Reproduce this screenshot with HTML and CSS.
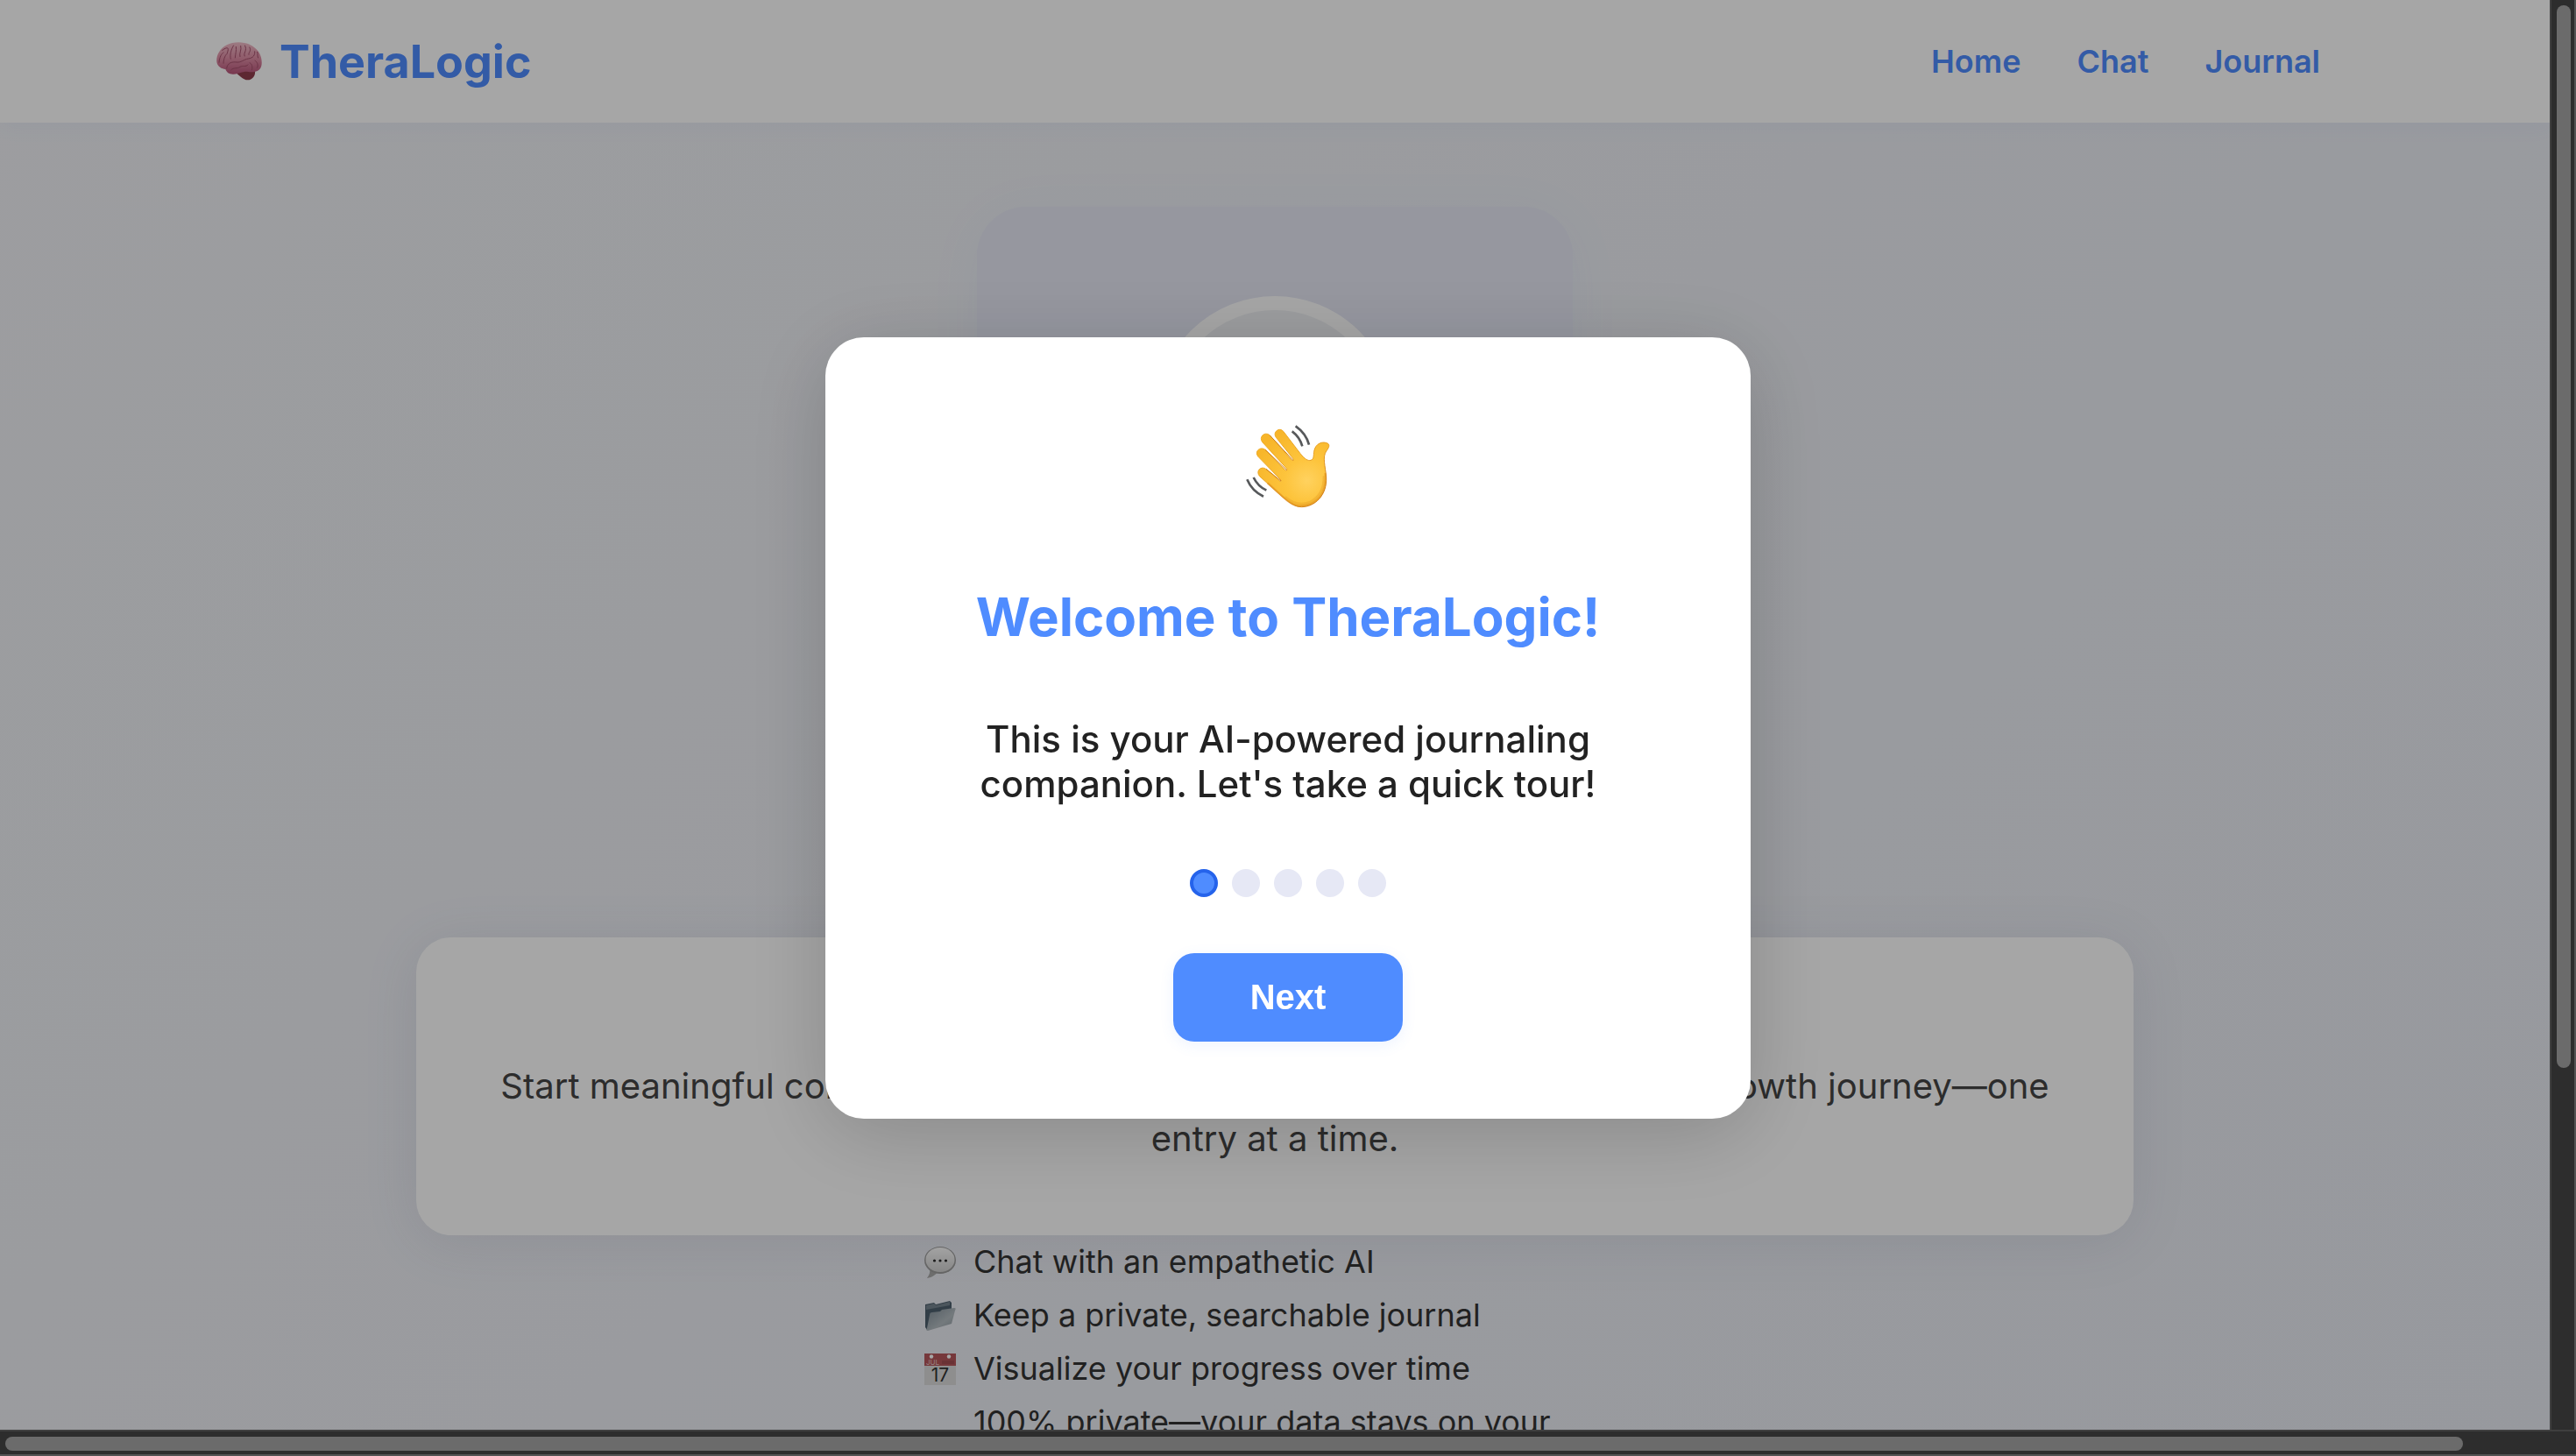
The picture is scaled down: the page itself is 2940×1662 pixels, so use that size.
FILE: index.html
```html
<!DOCTYPE html>
<html lang="en">
<head>
<meta charset="utf-8">
<title>TheraLogic</title>
<link rel="stylesheet" href="styles.css">
</head>
<body>
<div class="frame">
  <div class="page">
    <header class="header">
      <div class="header-inner">
        <a class="brand" href="#">
          <svg class="brand-icon" viewBox="138 138 162 138" aria-hidden="true">
            <defs>
              <linearGradient id="brain" x1="0" y1="0" x2="0" y2="1"><stop offset="0" stop-color="#f0bcc8"/><stop offset=".5" stop-color="#dd8ca4"/><stop offset="1" stop-color="#b8557a"/></linearGradient>
            </defs>
            <path d="M210 240C225 236 262 232 273 240C276 258 262 272 247 271C234 270 222 258 210 248Z" fill="#8f3d4c"/>
            <path d="M142 208C140 180 160 152 195 144C235 137 262 150 277 165C293 178 299 205 295 222C291 240 275 246 250 243C232 240 222 250 200 251C185 252 176 245 172 234C155 233 143 222 142 208Z" fill="url(#brain)"/>
            <g class="gyri"><path d="M150 212C152 190 158 182 166 176M165 215C166 195 172 185 180 178M160 170C180 155 185 160 178 178M190 200C186 185 192 165 200 152M205 196C206 180 210 172 208 156M222 192C218 178 228 170 224 153M238 190C232 178 248 170 238 152M252 185C250 176 262 172 254 158M176 232C178 212 195 208 210 210C225 212 235 200 250 198C266 196 274 186 272 172M190 238C200 226 212 234 222 226C232 220 240 228 250 218M262 238C266 224 262 215 254 212M280 230C286 220 280 208 272 204M284 196C280 186 284 180 280 174"/></g>
          </svg>
          <span>TheraLogic</span>
        </a>
        <nav class="nav">
          <a href="#">Home</a>
          <a href="#">Chat</a>
          <a href="#">Journal</a>
        </nav>
      </div>
    </header>
    <main class="main">
      <div class="hero"><div class="hero-circle"></div></div>
      <section class="intro">
        <p>Start meaningful conversations, reflect on your thoughts, and track your growth journey—one entry at a time.</p>
      </section>
      <ul class="features">
        <li>
          <svg class="feature-icon" viewBox="0 0 36 36" aria-hidden="true">
            <defs>
              <linearGradient id="bubble" x1="0" y1="0" x2="0" y2="1"><stop offset="0" stop-color="#fafafa"/><stop offset="1" stop-color="#cfcfcf"/></linearGradient>
            </defs>
            <path d="M6 25C7 30 5 33 3 36C9 35 13 32 15 29Z" fill="#a8a8a8"/>
            <ellipse cx="18" cy="15.500" rx="18" ry="15.500" fill="#9c9c9c"/>
            <ellipse cx="18" cy="15" rx="16.500" ry="14" fill="url(#bubble)"/>
            <g fill="#2c2c2c"><circle cx="11.500" cy="16" r="1.600"/><circle cx="18" cy="16" r="1.600"/><circle cx="24.500" cy="16" r="1.600"/></g>
          </svg>
          <span>Chat with an empathetic AI</span>
        </li>
        <li>
          <svg class="feature-icon" viewBox="0 0 36 36" aria-hidden="true">
            <defs>
              <linearGradient id="folder" x1="0" y1="0" x2="1" y2="1"><stop offset="0" stop-color="#7f8d97"/><stop offset=".6" stop-color="#b3bcc1"/><stop offset="1" stop-color="#8d989f"/></linearGradient>
            </defs>
            <path d="M1 5L11 3L13 5L29 1L31 3V24L3 34L1 31Z" fill="#4e606e"/>
            <path d="M2 6L11 4L13 6L29 2V6L2 11Z" fill="#75858f"/>
            <path d="M6 17C6 15 7 14 9 14L18 13L20 11L34 9C36 9 36 10 35 12L31 27L4 35C2 35 2 34 3 32Z" fill="url(#folder)"/>
          </svg>
          <span>Keep a private, searchable journal</span>
        </li>
        <li>
          <svg class="feature-icon" viewBox="0 0 36 36" aria-hidden="true">
            <path d="M0 1H36V36H0Z" fill="#dadada"/>
            <path d="M0 0H36V14H0Z" fill="#b5575b"/>
            <circle cx="8" cy="3.500" r="2.200" fill="#fff"/><circle cx="28" cy="3.500" r="2.200" fill="#fff"/>
            <path d="M20 8H34V12H20Z" fill="#a34d52"/>
            <text x="2" y="13" font-size="8" fill="#e5c5c5">JUL</text>
            <text x="18" y="32" font-size="21" text-anchor="middle" fill="#333">17</text>
          </svg>
          <span>Visualize your progress over time</span>
        </li>
        <li>
          <span class="feature-icon"></span>
          <span>100% private—your data stays on your device</span>
        </li>
      </ul>
    </main>
  </div>
  <div class="track track-y"><div class="thumb"></div></div>
  <div class="track track-x"><div class="thumb"></div></div>
</div>

<div class="overlay">
  <div class="modal" role="dialog" aria-modal="true" aria-labelledby="tour-title">
    <svg class="wave" viewBox="114 93 312 312" aria-hidden="true">
      <defs>
        <radialGradient id="hand" gradientUnits="userSpaceOnUse" cx="335" cy="295" r="190"><stop offset="0" stop-color="#ffd25f"/><stop offset=".4" stop-color="#fdc43c"/><stop offset="1" stop-color="#f7b529"/></radialGradient>
        <linearGradient id="edge" x1="0" y1="0" x2="1" y2="1"><stop offset="0" stop-color="#f3b02a"/><stop offset=".6" stop-color="#e59c20"/><stop offset="1" stop-color="#c26c10"/></linearGradient>
      </defs>
      <path d="M254 127L312 203C327 222 338 229 348 226C360 223 357 207 359 196C364 166 391 160 407 169C415 176 407 187 401 195C387 216 398 246 401 285C404 346 361 386 316 386C290 386 270 367 249 350L173 281C158 264 177 244 194 256L242 297C246 300 249 297 246 294L168 214C153 196 175 177 192 190L259 259C264 264 269 259 265 254L183 165C168 147 190 126 207 140L281 224C286 230 290 226 287 220L229 148C216 130 240 111 254 127Z" fill="url(#hand)" stroke="url(#edge)" stroke-width="3"/>
      <path d="M246 297L195 256M266 260L192 190M288 227L207 140" fill="none" stroke="#d08016" stroke-width="3"/>
      <path d="M200 304L252 351C290 388 316 386 346 376C384 361 402 327 398 270" fill="none" stroke="#d98518" stroke-width="7" opacity=".5"/>
      <path d="M260 352C290 378 316 380 344 370C378 354 394 324 393 280" fill="none" stroke="#eba527" stroke-width="8" opacity=".5"/>
      <path d="M296 109C320 126 335 145 342 173M284 127C303 141 313 157 319 178M130 292C142 321 160 338 186 350M152 285C162 306 177 320 196 329" fill="none" stroke="#57595b" stroke-width="8"/>
    </svg>
    <h1 class="modal-title" id="tour-title">Welcome to TheraLogic!</h1>
    <p class="modal-text">This is your AI-powered journaling companion. Let's take a quick tour!</p>
    <div class="steps">
      <span class="step step-active"></span>
      <span class="step"></span>
      <span class="step"></span>
      <span class="step"></span>
      <span class="step"></span>
    </div>
    <button class="next" type="button">Next</button>
  </div>
</div>
</body>
</html>
```
FILE: styles.css
```css
* { box-sizing: border-box; }
body {
  margin: 0;
  height: 100vh;
  overflow: hidden;
  font-family: Inter, "Liberation Sans", sans-serif;
  font-size: 36px;
  color: #222;
}
.frame {
  display: grid;
  grid-template-columns: minmax(0, 1fr) 30px;
  grid-template-rows: minmax(0, 1fr) 30px;
  height: 100vh;
  background: #454545;
}
.page {
  overflow: hidden;
  background: linear-gradient(135deg, #f1f2f6 0%, #e9ecf3 100%);
}
.header {
  height: 140px;
  padding: 0 246px;
  background: #fff;
  box-shadow: 0 4px 24px rgba(79, 140, 255, .05);
}
.header-inner {
  display: flex;
  align-items: center;
  justify-content: space-between;
  height: 100%;
}
.brand {
  display: flex;
  align-items: center;
  gap: 19px;
  color: #4f8cff;
  font-size: 52px;
  font-weight: 700;
  text-decoration: none;
}
.brand-icon { width: 54px; height: 46px; }
.gyri { fill: none; stroke: #a5506c; stroke-width: 3; }
.nav { display: flex; gap: 64px; padding-right: 16px; }
.nav a { color: #4f8cff; font-weight: 600; text-decoration: none; }
.main {
  display: flex;
  flex-direction: column;
  align-items: center;
  padding-top: 96px;
}
.hero {
  display: flex;
  justify-content: center;
  width: 680px;
  height: 680px;
  margin-bottom: 154px;
  padding-top: 102px;
  border-radius: 56px;
  background: #e6e8f5;
  box-shadow: 0 8px 64px rgba(79, 140, 255, .05);
}
.hero-circle {
  width: 272px;
  height: 272px;
  border: 16px solid #fff;
  border-radius: 50%;
  background: #eff1f4;
}
.intro {
  width: 1960px;
  max-width: 90%;
  padding: 140px 88px 80px;
  border-radius: 40px;
  background: #fff;
  box-shadow: 0 8px 64px rgba(60, 72, 120, .1);
  font-size: 40px;
  line-height: 60px;
  text-align: center;
  color: #444;
}
.intro p { margin: 0; }
.features {
  width: 800px;
  margin: 0;
  padding: 0;
  list-style: none;
  line-height: 61px;
  color: #333;
}
.features li { display: flex; align-items: center; gap: 20px; }
.feature-icon { flex: none; width: 36px; height: 36px; }
.track { background: #454545; }
.track-y {
  padding: 6px 4px 0 6px;
  border-left: 2px solid #626262;
  border-right: 2px solid #808080;
}
.track-y .thumb { width: 16px; height: calc(100% - 413px); }
.track-x {
  grid-column: 1 / -1;
  padding: 6px 0 0 6px;
  border-top: 2px solid #626262;
  border-bottom: 2px solid #808080;
}
.track-x .thumb { width: calc(100% - 129px); height: 16px; }
.thumb { border-radius: 8px; background: #a5a5a5; }
.overlay {
  position: fixed;
  inset: 0;
  display: flex;
  align-items: center;
  justify-content: center;
  background: rgba(0, 0, 0, .35);
}
.modal {
  display: flex;
  flex-direction: column;
  align-items: center;
  width: 1056px;
  padding: 96px 80px 88px;
  border-radius: 44px;
  background: #fff;
  box-shadow: 0 16px 96px rgba(0, 0, 0, .18);
  text-align: center;
}
.wave { width: 104px; height: 104px; }
.modal-title {
  margin: 83px 0 78px;
  color: #4f8cff;
  font-size: 60px;
  line-height: 72px;
  font-weight: 700;
}
.modal-text {
  max-width: 800px;
  margin: 0;
  font-size: 42px;
  line-height: 51px;
  font-weight: 500;
}
.steps { display: flex; gap: 16px; margin: 72px 0 64px; }
.step { width: 32px; height: 32px; border-radius: 50%; background: #e6e8f5; }
.step-active { border: 4px solid #2563eb; background: #4f8cff; }
.next {
  width: 262px;
  height: 101px;
  border: 0;
  border-radius: 24px;
  background: #4f8cff;
  box-shadow: 0 4px 16px rgba(79, 140, 255, .1);
  color: #fff;
  font: 700 40px "Liberation Sans", Arial, sans-serif;
}
```
